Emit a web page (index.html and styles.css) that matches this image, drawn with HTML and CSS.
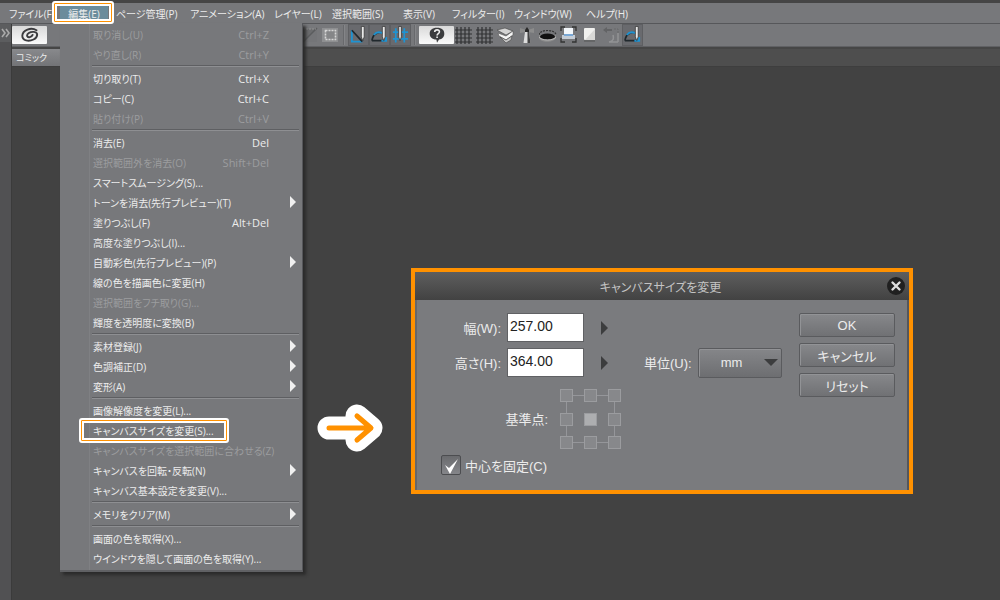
FILE: index.html
```html
<!DOCTYPE html>
<html lang="ja">
<head>
<meta charset="utf-8">
<title>キャンバスサイズを変更</title>
<link rel="stylesheet" href="styles.css">
</head>
<body>
<div class="app">
  <nav class="menubar">
    <button class="menubar-item">ファイル(F)</button>
    <div class="menubar-slot">
      <button class="menubar-item open">編集(E)</button>
      <div class="menu">
        <ul class="menu-group">
          <li><button class="item" disabled>取り消し(U)<kbd>Ctrl+Z</kbd></button></li>
          <li><button class="item" disabled>やり直し(R)<kbd>Ctrl+Y</kbd></button></li>
        </ul>
        <ul class="menu-group">
          <li><button class="item">切り取り(T)<kbd>Ctrl+X</kbd></button></li>
          <li><button class="item">コピー(C)<kbd>Ctrl+C</kbd></button></li>
          <li><button class="item" disabled>貼り付け(P)<kbd>Ctrl+V</kbd></button></li>
        </ul>
        <ul class="menu-group">
          <li><button class="item">消去(E)<kbd>Del</kbd></button></li>
          <li><button class="item" disabled>選択範囲外を消去(O)<kbd>Shift+Del</kbd></button></li>
          <li><button class="item">スマートスムージング(S)...</button></li>
          <li><button class="item sub">トーンを消去(先行プレビュー)(T)</button></li>
          <li><button class="item">塗りつぶし(F)<kbd>Alt+Del</kbd></button></li>
          <li><button class="item">高度な塗りつぶし(I)...</button></li>
          <li><button class="item sub">自動彩色(先行プレビュー)(P)</button></li>
          <li><button class="item">線の色を描画色に変更(H)</button></li>
          <li><button class="item" disabled>選択範囲をフチ取り(G)...</button></li>
          <li><button class="item">輝度を透明度に変換(B)</button></li>
        </ul>
        <ul class="menu-group">
          <li><button class="item sub">素材登録(J)</button></li>
          <li><button class="item sub">色調補正(D)</button></li>
          <li><button class="item sub">変形(A)</button></li>
        </ul>
        <ul class="menu-group">
          <li><button class="item">画像解像度を変更(L)...</button></li>
          <li><button class="item marked">キャンバスサイズを変更(S)...</button></li>
          <li><button class="item" disabled>キャンバスサイズを選択範囲に合わせる(Z)</button></li>
          <li><button class="item sub">キャンバスを回転・反転(N)</button></li>
          <li><button class="item">キャンバス基本設定を変更(V)...</button></li>
        </ul>
        <ul class="menu-group">
          <li><button class="item sub">メモリをクリア(M)</button></li>
        </ul>
        <ul class="menu-group">
          <li><button class="item">画面の色を取得(X)...</button></li>
          <li><button class="item">ウインドウを隠して画面の色を取得(Y)...</button></li>
        </ul>
      </div>
    </div>
    <button class="menubar-item">ページ管理(P)</button>
    <button class="menubar-item">アニメーション(A)</button>
    <button class="menubar-item">レイヤー(L)</button>
    <button class="menubar-item">選択範囲(S)</button>
    <button class="menubar-item">表示(V)</button>
    <button class="menubar-item">フィルター(I)</button>
    <button class="menubar-item">ウィンドウ(W)</button>
    <button class="menubar-item">ヘルプ(H)</button>
  </nav>

  <div class="frame">
    <aside class="rail">
      <button class="rail-toggle" aria-label="パネルを開く">
        <svg viewBox="0 0 10 10" width="10" height="10"><path d="M1 1l3 4-3 4M5 1l3 4-3 4" fill="none" stroke="#aaa" stroke-width="1.6"/></svg>
      </button>
    </aside>
    <main class="main">
      <div class="toolbar">
        <button class="tool wide" aria-label="CLIP STUDIO">
          <svg viewBox="0 0 20 16" width="20" height="16"><path d="M16.500 3.200C11-.2 2.500 3.200 2.300 8.800c0 5 6.400 6 11.200 3.700 4.300-2.100 5.200-7.100.4-7.600C10 4.500 6.500 7 7.200 9.200c.7 1.900 4.600.9 5.400-1.300" fill="none" stroke="#3b3b3e" stroke-width="1.900" stroke-linecap="round"/></svg>
        </button>
        <span class="tool-space"></span>
        <button class="tool" aria-label="選択解除" disabled><svg viewBox="0 0 20 20"><path d="M4 17V4h14z" fill="#6b6c6e"/><path d="M4 17h14V4z" fill="#747578"/><path d="M3 18L18 3" stroke="#5b5c5e" stroke-width="1.500"/><path d="M4 4h13" stroke="#929292" stroke-dasharray="2 1"/></svg></button>
        <button class="tool" aria-label="選択範囲"><svg viewBox="0 0 20 20"><rect x="2" y="3" width="16" height="14" fill="#8e8f91"/><rect x="5.500" y="5.500" width="10" height="9" fill="#858688" stroke="#d5d5d5" stroke-width="1.600" stroke-dasharray="2 1"/></svg></button>
        <span class="tool-sep"></span>
        <button class="tool on" aria-label="定規にスナップ"><svg viewBox="0 0 20 20"><path d="M3 5v12h11" fill="none" stroke="#1e93d2" stroke-width="2"/><path d="M3 5l11 12" stroke="#20282d" stroke-width="1.800"/><path d="M13 1h3v11l-1.500 4L13 12z" fill="#e8e8e8" stroke="#333" stroke-width=".8"/></svg></button>
        <button class="tool on" aria-label="特殊定規にスナップ"><svg viewBox="0 0 20 20"><path d="M2 16C3 9 8 6 14 8M2 16h13" fill="none" stroke="#20282d" stroke-width="1.800"/><path d="M4 10c3-4 7-3 9-2M12 16h5v-4" fill="none" stroke="#1e93d2" stroke-width="2"/><path d="M13 1h3v11l-1.500 4L13 12z" fill="#e8e8e8" stroke="#333" stroke-width=".8"/></svg></button>
        <button class="tool on" aria-label="グリッドにスナップ"><svg viewBox="0 0 20 20"><path d="M2 7h16M2 14h16M5 3v15M14 3v15" stroke="#1e93d2" stroke-width="1.800"/><path d="M8 1h3v11l-1.500 4L8 12z" fill="#d5d5d5" stroke="#333" stroke-width=".8"/></svg></button>
        <span class="tool-sep"></span>
        <button class="tool wide" aria-label="ヘルプ">
          <svg viewBox="0 0 18 16" width="18" height="16"><path d="M9 .8c5 0 7.300 2.500 7.300 5.900S14 12 11 12.500L9 15.700l-.6-3.100C4 12.300 1.700 10 1.700 6.700S4 .8 9 .8z" fill="#3b3c3e"/><path d="M6.700 5c.2-3 5-2.700 4.700 0-.1 1.600-2.300 1.600-2.300 3.400M9.100 9.400v1.700" fill="none" stroke="#eee" stroke-width="1.600"/></svg>
        </button>
        <button class="tool" aria-label="グリッド"><svg viewBox="2 0 20 20"><path d="M2 5h17M2 9h17M2 13h17M2 17h17M4 2v17M8 2v17M12 2v17M16 2v17" stroke="#303133" stroke-width="1.200"/></svg></button>
        <button class="tool" aria-label="細かいグリッド"><svg viewBox="2 0 20 20"><path d="M2 5h17M2 9h17M2 13h17M2 17h17M4 2v17M8 2v17M12 2v17M16 2v17" stroke="#303133" stroke-width="1.200"/></svg></button>
        <button class="tool" aria-label="マテリアル"><svg viewBox="2 0 20 20"><path d="M2 5l8-2 8 3-7 4z" fill="#d4d4d4" stroke="#444" stroke-width=".6"/><path d="M3 8l8 3 7-5v4l-7 5-7-4z" fill="#f5f5f5" stroke="#555" stroke-width=".6"/><path d="M5 12l6 3 6-4-1 4-5 3z" fill="#c5c5c5" stroke="#444" stroke-width=".6"/></svg></button>
        <button class="tool" aria-label="光源"><svg viewBox="1 0 20 20"><path d="M3 3l6 2v2L3 8zM17 3l-6 2v2l6 1z" fill="#8c8c8c"/><path d="M8 5l2-3 2 3v2H8z" fill="#292929"/><path d="M8 7h4l1.500 11h-7z" fill="#ddd"/><path d="M10.500 7H12l1.500 11h-3z" fill="#444"/></svg></button>
        <button class="tool" aria-label="消失点"><svg viewBox="2 0 20 20"><path d="M2 10v3c1 5 15 5 17 0v-3z" fill="#8d8d8d"/><ellipse cx="10.500" cy="11.500" rx="7.500" ry="3" fill="#111"/><path d="M2 10c0-6 17-6 17 0" fill="none" stroke="#333" stroke-width="1.200" stroke-dasharray="2 1"/><path d="M2 12c2 4 15 4 17 0" fill="none" stroke="#b5b5b5"/></svg></button>
        <button class="tool" aria-label="表示領域"><svg viewBox="2 0 20 20"><path d="M3 6V2h4M14 2h4v4M18 13v4h-4M7 17H3v-4" fill="none" stroke="#333" stroke-width="1.300"/><path d="M6 3h9v7H6z" fill="#f3f7fb"/><path d="M4 10h13v4H4z" fill="#c4ccd5"/><path d="M6 9h9v2H6z" fill="#79a8d6"/></svg></button>
        <button class="tool" aria-label="用紙"><svg viewBox="2 0 20 20"><rect x="5" y="3" width="11" height="12" rx="1" fill="#f1f1ef"/><path d="M16 4v11H6z" fill="#d9d9d7"/><path d="M5 16h11" stroke="#555"/></svg></button>
        <button class="tool" aria-label="曲線" disabled><svg viewBox="1 0 20 20"><path d="M2 5l4-3v2h5v2H6v2z" fill="#626365"/><path d="M8 17h9M8 17c5-1 5-4 4-7M17 17V8" fill="none" stroke="#929395" stroke-width="1.500"/><path d="M13 4h4v4" fill="none" stroke="#68696b" stroke-dasharray="2 1"/></svg></button>
        <button class="tool on" aria-label="定規"><svg viewBox="0 0 20 20"><path d="M2 16C3 9 8 6 14 8M2 16h13" fill="none" stroke="#20282d" stroke-width="1.800"/><path d="M4 10c3-4 7-3 9-2M12 16h5v-4" fill="none" stroke="#1e93d2" stroke-width="2"/><path d="M13 1h3v11l-1.500 4L13 12z" fill="#e8e8e8" stroke="#333" stroke-width=".8"/></svg></button>
      </div>
      <div class="tabs"><button class="tab">コミック</button></div>
      <div class="workspace"></div>
    </main>
  </div>

  <svg class="arrow" viewBox="0 0 68 52" width="68" height="52" aria-hidden="true">
    <path d="M12 26h38M40 14l14 12-14 12" fill="none" stroke="#fff" stroke-width="23" stroke-linecap="round" stroke-linejoin="round"/>
    <path d="M12 26h41M40 14l14 12-14 12" fill="none" stroke="#ff9100" stroke-width="5" stroke-linecap="round" stroke-linejoin="round"/>
  </svg>

  <section class="dialog" role="dialog" aria-labelledby="dialog-title">
    <header class="dialog-head">
      <h1 id="dialog-title">キャンバスサイズを変更</h1>
      <button class="close" aria-label="閉じる"><svg viewBox="0 0 20 20" width="20" height="20"><circle cx="10" cy="10" r="9" fill="#202020"/><path d="M6.500 6.500l7 7M13.500 6.500l-7 7" stroke="#ddd" stroke-width="2.400" stroke-linecap="round"/></svg></button>
    </header>
    <form class="dialog-body">
      <div class="fields">
        <label for="w">幅(W):</label>
        <input class="num" id="w" type="text" value="257.00">
        <button class="step" type="button" aria-label="幅の調整"></button>
        <label class="row2" for="h">高さ(H):</label>
        <input class="num" id="h" type="text" value="364.00">
        <button class="step" type="button" aria-label="高さの調整"></button>
        <label class="unit" for="u">単位(U):</label>
        <div class="select-wrap"><select id="u"><option>mm</option></select></div>
        <span class="anchor-label" id="anchor-label">基準点:</span>
        <div class="anchor" role="group" aria-labelledby="anchor-label">
          <button type="button" aria-label="左上"></button><button type="button" aria-label="上"></button><button type="button" aria-label="右上"></button>
          <button type="button" aria-label="左"></button><button class="current" type="button" aria-label="中央"></button><button type="button" aria-label="右"></button>
          <button type="button" aria-label="左下"></button><button type="button" aria-label="下"></button><button type="button" aria-label="右下"></button>
        </div>
        <div class="lock"><span class="tick"><input type="checkbox" id="c" checked><svg viewBox="0 0 20 20" width="20" height="20"><path d="M4 10l4 3 9-9-8 15z" fill="#fff"/></svg></span><label for="c">中心を固定(C)</label></div>
      </div>
      <div class="actions">
        <button type="button">OK</button>
        <button type="button">キャンセル</button>
        <button type="button">リセット</button>
      </div>
    </form>
  </section>
</div>
</body>
</html>
```

FILE: styles.css
```css
*, *::before, *::after { box-sizing: border-box; }

body {
  margin: 0;
  background: #424242;
  color: #ececec;
  font-family: "Open Sans", "Noto Sans CJK JP", sans-serif;
  font-size: 10px;
  font-feature-settings: "palt";
}

button, input, select {
  margin: 0;
  padding: 0;
  border: 0;
  background: none;
  color: inherit;
  font: inherit;
  font-feature-settings: inherit;
}

ul { margin: 0; padding: 0; list-style: none; }

.app {
  position: relative;
  display: flex;
  flex-direction: column;
  min-height: 100vh;
}

/* menu bar */
.menubar {
  display: grid;
  grid-template-columns: 51px 56px 74px 84px 58px 71px 49px 62px 72px 60px;
  height: 24px;
  padding-left: 9px;
  border-top: 3px solid #454545;
  border-bottom: 1px solid #56575a;
  background: #77787b;
}
.menubar-item { height: 20px; text-align: left; white-space: nowrap; }
.menubar-slot { position: relative; }
.menubar-item.open {
  width: 48px;
  background: #6b8c9c;
  text-align: center;
}
.menubar-item.open::after,
.item.marked::after {
  content: "";
  position: absolute;
  border: 2px solid #fff;
  border-radius: 3px;
  box-shadow: inset 0 0 0 1px #ff9100, inset 0 0 0 3px #fff;
}
.menubar-item.open::after { z-index: 3; top: -2px; left: -8px; width: 62px; height: 23px; }

/* drop-down menu */
.menu {
  position: absolute;
  z-index: 2;
  top: 20px;
  left: 0;
  width: 243px;
  padding: 1px 3px 2px 0;
  border-right: 1px solid #55565a;
  border-bottom: 2px solid #606164;
  background: linear-gradient(90deg, transparent 29px, #7f8083 29px, #7f8083 30px, transparent 30px) #77787b;
  box-shadow: 3px 3px 3px #2a2a2a;
}
.menu-group + .menu-group::before {
  content: "";
  display: block;
  height: 2px;
  margin: 1px 0 1px 32px;
  border-top: 1px solid #5e5f62;
  border-bottom: 1px solid #8e8f92;
}
.item {
  position: relative;
  display: flex;
  justify-content: space-between;
  align-items: center;
  width: 100%;
  height: 20px;
  padding: 0 30px 0 33px;
  white-space: nowrap;
}
.item:disabled { color: #9c9d9f; }
.item kbd { font: inherit; font-size: 11px; }
.item.sub::after {
  content: "";
  position: absolute;
  top: 4px;
  right: 3px;
  border: 6px solid transparent;
  border-left-color: #f0f0f0;
  border-right: 0;
}
.item.marked::after { top: -2px; left: 19px; width: 150px; height: 25px; }

/* frame */
.frame { display: flex; flex: 1; }
.rail { width: 12px; border-right: 1px solid #3b3b3b; background: #515153; }
.rail-toggle { display: flex; align-items: center; justify-content: center; width: 11px; height: 18px; background: #5c5d5f; }
.main { display: flex; flex: 1; flex-direction: column; }
.toolbar {
  display: flex;
  align-items: center;
  height: 23px;
  border-bottom: 1px solid #606164;
  background: #77787b;
}
.tool { display: flex; align-items: center; justify-content: center; width: 21px; height: 22px; }
.tool svg { display: block; width: 20px; height: 20px; }
.tool.on { border: 1px solid #5e5f62; background: #696a6e; }
.tool.wide {
  width: 35px;
  height: 18px;
  border-radius: 1px;
  background: linear-gradient(#d9d9d9, #fafafa);
}
.tool.wide svg { width: 20px; height: 16px; }
.tool-space { width: 251px; }
.tool-sep { width: 2px; height: 20px; margin: 0 3px; border-left: 1px solid #68696c; border-right: 1px solid #848588; }
.tabs { display: flex; height: 20px; border-top: 2px solid #464646; border-bottom: 1px solid #3e3e3e; background: #4e4e4e; }
.tab { width: 100px; padding-left: 4px; background: linear-gradient(#88898c, #737477); text-align: left; font-size: 9px; }
.workspace { flex: 1; background: #424242; }

.arrow { position: absolute; top: 402px; left: 317px; }

/* dialog */
.dialog {
  position: absolute;
  top: 268px;
  left: 411px;
  width: 502px;
  border: 4px solid #ff9100;
  background: #7a7b7e;
  font-family: "Liberation Sans", "Noto Sans CJK JP", sans-serif;
  font-size: 13px;
}
.dialog-head {
  display: flex;
  align-items: center;
  height: 28px;
  padding: 0 3px 0 20px;
  background: linear-gradient(#5e5e5e, #424242);
  color: #c4c4c4;
}
.dialog-head h1 { flex: 1; margin: 0; font-size: 12px; font-weight: 400; text-align: center; }
.close { width: 20px; height: 20px; }
.close svg { display: block; }
.dialog-body {
  display: flex;
  justify-content: space-between;
  padding: 13px 12px 15px 24px;
  border-left: 2px solid #66676a;
  border-right: 2px solid #55565a;
}
.fields {
  display: grid;
  grid-template-columns: 60px 77px 8px auto 84px;
  grid-template-rows: 29px 29px 66px 20px;
  align-items: center;
  gap: 6px;
}
.fields > label, .anchor-label { text-align: right; white-space: nowrap; }
.row2 { grid-column: 1; }
.num {
  width: 77px;
  height: 29px;
  padding: 0 2px 3px;
  border: 1px solid #606164;
  background: #fff;
  color: #222;
  font-size: 14px;
}
.step {
  width: 0;
  height: 14px;
  margin-left: 11px;
  border: 7px solid transparent;
  border-left-color: #3c3d3e;
  border-right: 0;
}
.unit { padding-left: 40px; }
.select-wrap { position: relative; }
.select-wrap select {
  width: 84px;
  height: 30px;
  padding-left: 22px;
  border: 1px solid #5a5b5e;
  border-radius: 2px;
  background: linear-gradient(#858689, #6d6e71);
  box-shadow: inset 1px 1px #929396;
  appearance: none;
}
.select-wrap::after {
  content: "";
  position: absolute;
  top: 11px;
  right: 4px;
  border: 7px solid transparent;
  border-top-color: #3c3d3e;
  border-bottom: 0;
  pointer-events: none;
}
.anchor-label { grid-column: 1 / 3; padding: 4px 36px 0 0; }
.anchor {
  display: grid;
  grid-template-columns: repeat(3, 13px);
  justify-content: space-between;
  align-content: space-between;
  align-self: end;
  grid-column: 3 / 6;
  width: 61px;
  height: 60px;
  margin-left: -30px;
  background:
    linear-gradient(#95969a, #95969a) 6px 6px / 49px 1px no-repeat,
    linear-gradient(#95969a, #95969a) 6px 53px / 49px 1px no-repeat,
    linear-gradient(#95969a, #95969a) 6px 6px / 1px 48px no-repeat,
    linear-gradient(#95969a, #95969a) 54px 6px / 1px 48px no-repeat;
}
.anchor button { width: 13px; height: 13px; border: 1px solid #9b9c9f; background: #87888b; }
.anchor .current { background: #adaeb0; }
.lock { display: flex; align-items: center; gap: 4px; grid-column: 1 / 6; }
.tick { position: relative; width: 20px; height: 20px; }
.tick input {
  display: block;
  width: 20px;
  height: 20px;
  border: 1px solid #4c4d50;
  border-radius: 2px;
  background: linear-gradient(#6a6b6e, #85868a);
  appearance: none;
}
.tick svg { position: absolute; inset: 0; display: none; pointer-events: none; }
.tick input:checked + svg { display: block; }
.actions { display: flex; flex-direction: column; gap: 6px; }
.actions button {
  width: 96px;
  height: 24px;
  border: 1px solid #5a5b5e;
  border-radius: 2px;
  background: linear-gradient(#87888b, #707174);
  box-shadow: inset 1px 1px #929396;
}
```
